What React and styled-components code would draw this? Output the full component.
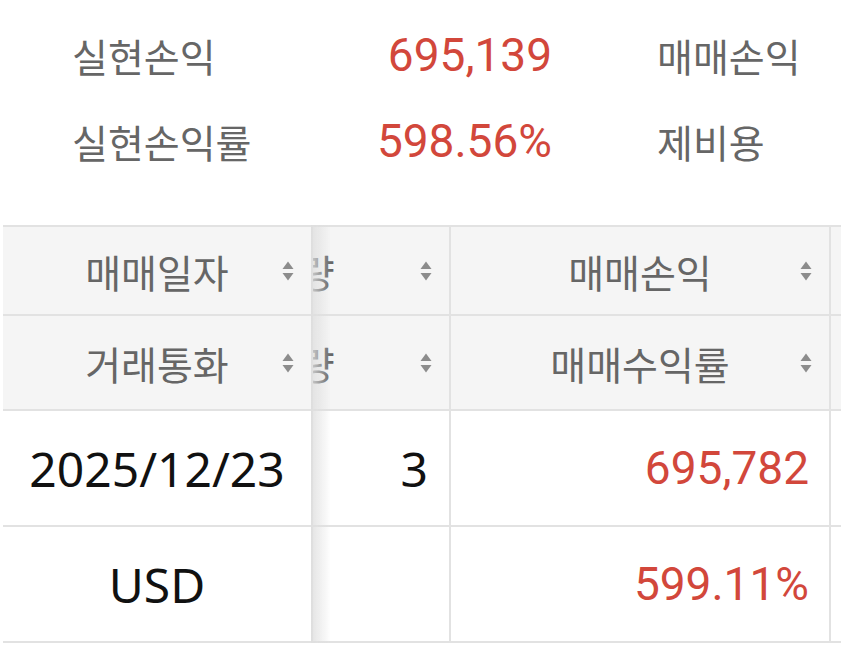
import { useLayoutEffect, useRef } from "react";
import styled, { createGlobalStyle } from "styled-components";

const GlobalStyle = createGlobalStyle`
  html, body {
    margin: 0;
    padding: 0;
    background: #fff;
  }
  body {
    font-family: "Noto Sans CJK KR", "Noto Sans", sans-serif;
    overflow: hidden;
  }
`;

const RED = "#d2473b";
const LINE = "#e2e2e2";

const summary = [
  { label: "실현손익", value: "695,139", label2: "매매손익" },
  { label: "실현손익률", value: "598.56%", label2: "제비용" },
];

const Page = styled.div`
  width: 841px;
  height: 654px;
  overflow: hidden;
`;

const Summary = styled.div`
  display: grid;
  grid-template-columns: 280px 200px 1fr;
  grid-auto-rows: 86px;
  align-items: center;
  padding: 12px 0 0 72px;
  margin-bottom: 41px;
`;

const SumLabel = styled.div`
  font-family: "Noto Sans CJK KR", sans-serif;
  font-size: 39px;
  color: #666;
  padding-left: ${(p) => (p.$second ? "105px" : "0")};
  white-space: nowrap;
`;

const SumValue = styled.div`
  font-family: Roboto, sans-serif;
  font-size: 46px;
  color: ${RED};
  text-align: right;
  white-space: nowrap;
`;

const Scroller = styled.div`
  margin-left: 3px;
  width: 838px;
  overflow-x: auto;
  scrollbar-width: none;
  &::-webkit-scrollbar {
    display: none;
  }
`;

const Grid = styled.div`
  display: grid;
  grid-template-columns: 310px 374px 380px 300px;
  grid-template-rows: 91px 95px 116px 116px;
  width: max-content;
`;

const Cell = styled.div`
  box-sizing: border-box;
  position: ${(p) => (p.$sticky ? "sticky" : "relative")};
  left: ${(p) => (p.$sticky ? "0" : "auto")};
  z-index: ${(p) => (p.$sticky ? 2 : 0)};
  display: flex;
  align-items: center;
  justify-content: ${(p) => (p.$right ? "flex-end" : "center")};
  padding: 0 ${(p) => (p.$right ? `${p.$pad ?? 20}px` : "0")} 0 0;
  background: ${(p) => (p.$head ? "#f5f5f5" : "#fff")};
  border-bottom: 2px solid ${LINE};
  border-right: 2px solid ${LINE};
  border-top: ${(p) => (p.$top ? `2px solid ${LINE}` : "0")};
  white-space: nowrap;

  ${(p) =>
    p.$sticky &&
    `
    &::after {
      content: "";
      position: absolute;
      top: ${p.$top ? "-2px" : "0"};
      bottom: -2px;
      left: 100%;
      width: 20px;
      background: linear-gradient(to right, rgba(222,222,222,0.85), rgba(240,240,240,0));
      pointer-events: none;
    }
  `}
`;

const HeadText = styled.span`
  font-family: "Noto Sans CJK KR", sans-serif;
  font-size: 39px;
  color: #666;
`;

const DataText = styled.span`
  font-family: "Noto Sans", "Open Sans", sans-serif;
  font-size: 48px;
  color: #111;
`;

const RedText = styled.span`
  font-family: Roboto, sans-serif;
  font-size: 46px;
  color: ${RED};
`;

const SortWrap = styled.span`
  position: absolute;
  right: 17px;
  top: 50%;
  transform: translateY(-50%);
  display: flex;
`;

const SortIcon = () => (
  <SortWrap>
    <svg width="12" height="21" viewBox="0 0 12 21">
      <path d="M6 1 L11.5 8.5 H0.5 Z" fill="#8c8c8c" />
      <path d="M0.5 12.5 H11.5 L6 20 Z" fill="#8c8c8c" />
    </svg>
  </SortWrap>
);

const headRows = [
  ["매매일자", "매매수량", "매매손익"],
  ["거래통화", "잔고수량", "매매수익률"],
];

export default function App() {
  const scrollRef = useRef(null);

  useLayoutEffect(() => {
    if (scrollRef.current) scrollRef.current.scrollLeft = 236;
  }, []);

  return (
    <Page>
      <GlobalStyle />
      <Summary>
        {summary.map((s) => [
          <SumLabel key={s.label}>{s.label}</SumLabel>,
          <SumValue key={s.value}>{s.value}</SumValue>,
          <SumLabel key={s.label2} $second>
            {s.label2}
          </SumLabel>,
        ])}
      </Summary>

      <Scroller ref={scrollRef}>
        <Grid>
          {headRows.map((row, r) => [
            ...row.map((h, c) => (
              <Cell key={`${r}-${c}`} $head $top={r === 0} $sticky={c === 0}>
                <HeadText>{h}</HeadText>
                <SortIcon />
              </Cell>
            )),
            <Cell key={`${r}-more`} $head $top={r === 0} />,
          ])}

          <Cell $sticky>
            <DataText>2025/12/23</DataText>
          </Cell>
          <Cell $right $pad={21}>
            <DataText>3</DataText>
          </Cell>
          <Cell $right>
            <RedText>695,782</RedText>
          </Cell>
          <Cell />

          <Cell $sticky>
            <DataText>USD</DataText>
          </Cell>
          <Cell />
          <Cell $right>
            <RedText>599.11%</RedText>
          </Cell>
          <Cell />
        </Grid>
      </Scroller>
    </Page>
  );
}
